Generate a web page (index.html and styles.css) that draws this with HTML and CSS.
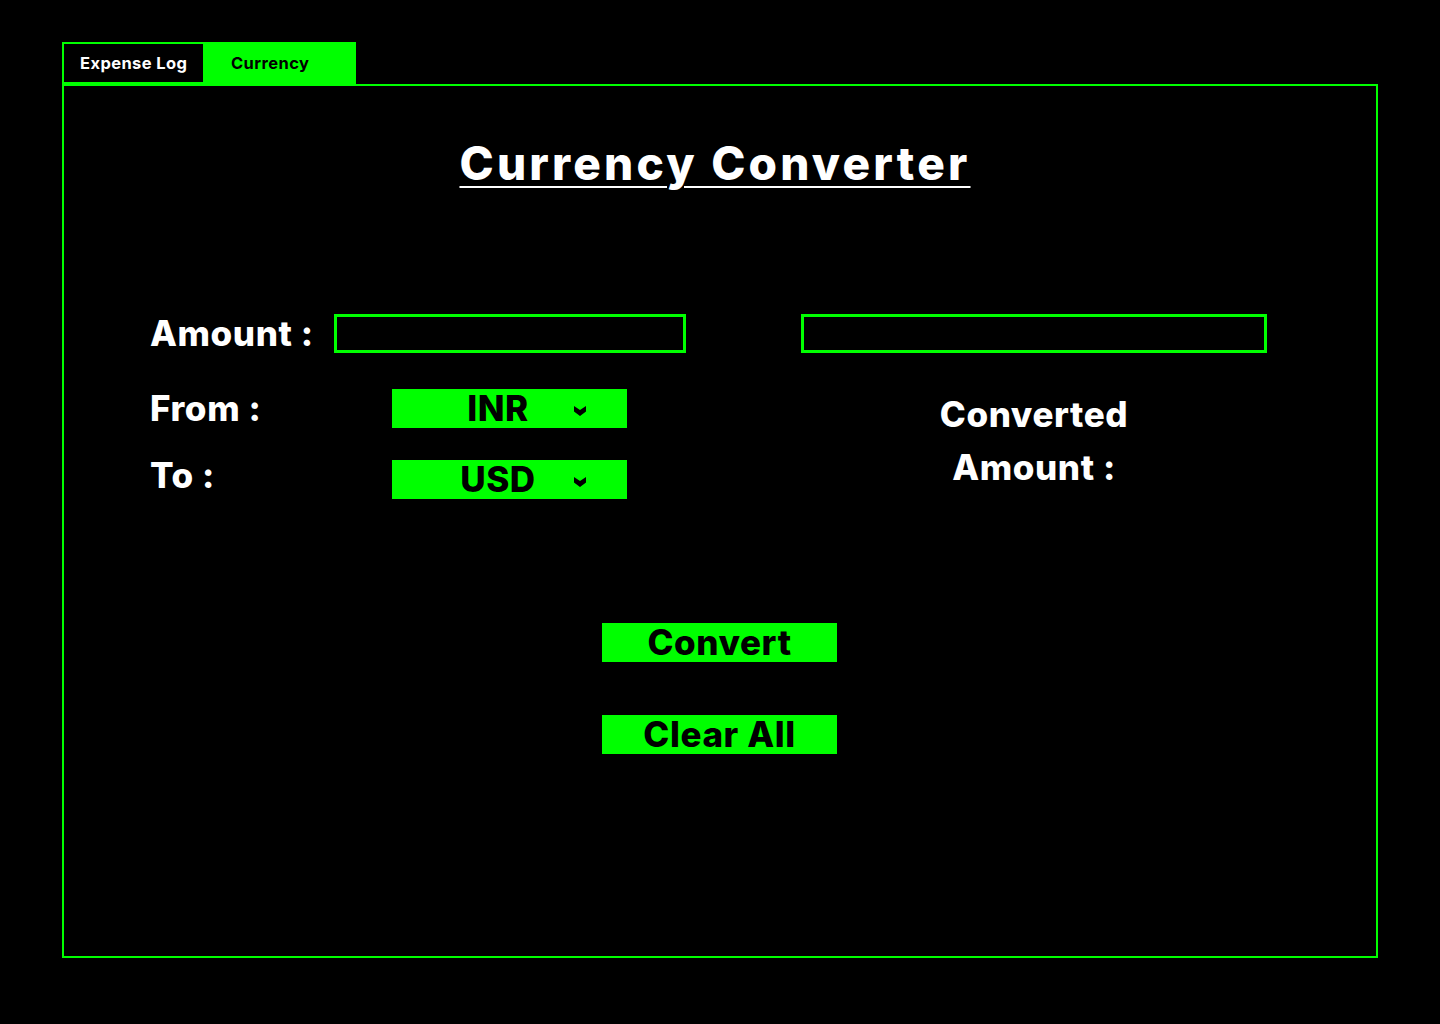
FILE: index.html
```html
<!DOCTYPE html>
<html lang="en">
<head>
<meta charset="utf-8">
<title>Currency Converter</title>
<link rel="stylesheet" href="styles.css">
</head>
<body>
<div class="app">
  <nav class="tabs">
    <div class="tab tab-log">Expense Log</div>
    <div class="tab tab-currency">Currency</div>
  </nav>
  <main class="panel">
    <h1 class="title">Currency Converter</h1>
    <section class="form">
      <div class="left">
        <div class="row">
          <label class="label label-amount">Amount :</label>
          <input class="field field-amount" type="text">
        </div>
        <div class="row row-from">
          <span class="label label-select">From :</span>
          <div class="select">
            <span class="select-text">INR</span>
            <svg class="chev" width="12" height="10" viewBox="0 0 12 10"><path d="M0 0 L6 4 L12 0 L12 5.5 L6 10 L0 5.5 Z" fill="#000"/></svg>
          </div>
        </div>
        <div class="row row-to">
          <span class="label label-select label-to">To :</span>
          <div class="select">
            <span class="select-text">USD</span>
            <svg class="chev" width="12" height="10" viewBox="0 0 12 10"><path d="M0 0 L6 4 L12 0 L12 5.5 L6 10 L0 5.5 Z" fill="#000"/></svg>
          </div>
        </div>
      </div>
      <div class="right">
        <input class="field field-result" type="text">
        <p class="result-label">Converted<br>Amount :</p>
      </div>
    </section>
    <section class="actions">
      <button class="btn">Convert</button>
      <button class="btn btn-clear">Clear All</button>
    </section>
  </main>
</div>
</body>
</html>
```

FILE: styles.css
```css
* { box-sizing: border-box; }

html, body {
  margin: 0;
  padding: 0;
  background: #000;
}

body {
  font-family: Inter, "Open Sans", "Liberation Sans", sans-serif;
  font-weight: 800;
  color: #fff;
}

.app {
  padding: 42px 0 0 62px;
  width: 1378px;
}

.tabs {
  display: flex;
  height: 42px;
}

.tab {
  height: 42px;
  display: flex;
  align-items: center;
  font-size: 16.5px;
  letter-spacing: 0.4px;
  font-weight: 700;
}

.tab-log {
  width: 143px;
  border: 2px solid #00ff00;
  padding-left: 16px;
  color: #fff;
  background: #000;
}

.tab-currency {
  width: 151px;
  padding-left: 26px;
  background: #00ff00;
  color: #000;
}

.panel {
  width: 1316px;
  height: 874px;
  border: 2px solid #00ff00;
}

.title {
  margin: 50px 0 0;
  text-align: center;
  font-size: 46px;
  letter-spacing: 3.2px;
  line-height: 54px;
  font-weight: 800;
  color: #fff;
  padding-right: 10px;
  text-decoration: underline;
  text-decoration-thickness: 2px;
  text-underline-offset: 6px;
}

.form {
  display: flex;
  margin-top: 124px;
  padding-left: 86px;
}

.left {
  width: 536px;
  flex: none;
  display: flex;
  flex-direction: column;
}

.row {
  display: flex;
  align-items: center;
  height: 39px;
}

.row-from { margin-top: 36px; }
.row-to { margin-top: 32px; }

.label {
  font-size: 35px;
  letter-spacing: 0.6px;
  line-height: 39px;
  color: #fff;
  white-space: nowrap;
}

.label-amount { width: 184px; flex: none; }
.label-select { width: 242px; flex: none; }
.label-to { padding-bottom: 9px; line-height: 30px; }

.field {
  height: 39px;
  background: #000;
  border: 3px solid #00ff00;
  border-radius: 0;
  outline: none;
  color: #fff;
  font: inherit;
  padding: 0 8px;
}

.field-amount {
  width: 352px;
  flex: none;
}

.select {
  width: 235px;
  height: 39px;
  flex: none;
  background: #00ff00;
  color: #000;
  display: flex;
  align-items: center;
}

.select-text {
  flex: 1;
  text-align: center;
  padding-left: 30px;
  font-size: 35px;
  letter-spacing: 0.5px;
  line-height: 39px;
}

.chev {
  display: block;
  margin: 4px 41px 0 0;
}

.right {
  margin-left: 115px;
  width: 466px;
  flex: none;
  display: flex;
  flex-direction: column;
}

.field-result {
  width: 466px;
}

.result-label {
  margin: 35px 0 0;
  text-align: center;
  font-size: 35px;
  letter-spacing: 0.6px;
  line-height: 53px;
  color: #fff;
}

.actions {
  margin-top: 124px;
  display: flex;
  flex-direction: column;
  align-items: center;
  gap: 53px;
  padding-right: 1px;
}

.btn {
  width: 235px;
  height: 39px;
  border: none;
  border-radius: 0;
  padding: 0;
  background: #00ff00;
  color: #000;
  font-family: inherit;
  font-weight: 800;
  font-size: 35px;
  letter-spacing: 0.6px;
  line-height: 39px;
  cursor: pointer;
}
```
